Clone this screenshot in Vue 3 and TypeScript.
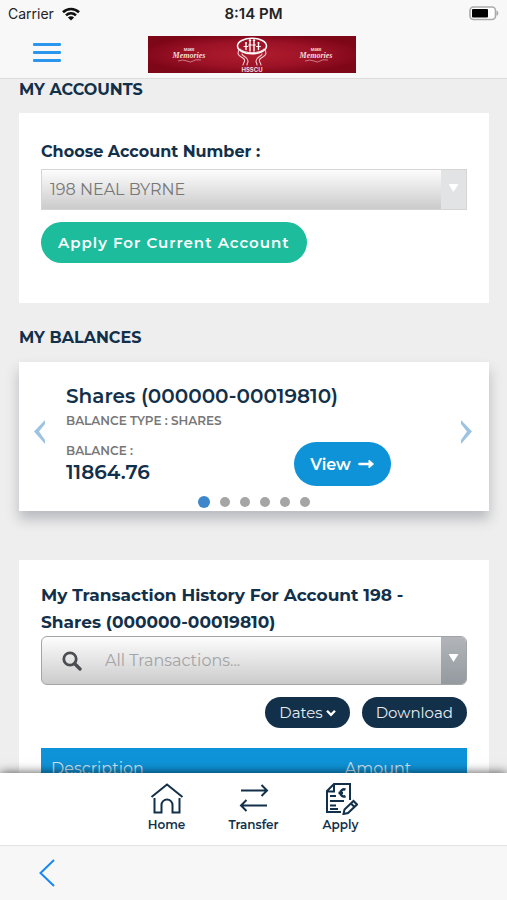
<script setup lang="ts">
import { ref } from 'vue'

interface Balance {
  name: string
  type: string
  amount: string
}

const account = ref('198 NEAL BYRNE')
const accounts: string[] = ['198 NEAL BYRNE']
const transactionFilter = ref('All Transactions...')
const balance: Balance = {
  name: 'Shares (000000-00019810)',
  type: 'SHARES',
  amount: '11864.76',
}
const slides = 6
const activeSlide = ref(0)

function step(by: number): void {
  activeSlide.value = (activeSlide.value + by + slides) % slides
}
</script>

<template>
  <div class="screen">
    <header class="top">
      <div class="status">
        <div class="carrier">
          <span>Carrier</span>
          <svg width="18" height="14" viewBox="0 0 18 14" aria-hidden="true">
            <g fill="none" stroke="#111" stroke-width="2.6">
              <path d="M1 5.2C5.5 0.9 12.5 0.9 17 5.2" />
              <path d="M4 8.4C6.9 5.7 11.1 5.7 14 8.4" />
            </g>
            <path d="M9 13.5L5.9 10.4C7.7 8.9 10.3 8.9 12.1 10.4Z" fill="#111" />
          </svg>
        </div>
        <strong class="clock">8:14 PM</strong>
        <svg class="battery" width="30" height="15" viewBox="0 0 30 15" aria-hidden="true">
          <rect x="1" y="1" width="25.5" height="12.5" rx="3.5" fill="#fff" stroke="#aaa" stroke-width="1.6" />
          <rect x="3" y="3" width="16" height="8.5" rx="1" fill="#000" />
          <path d="M28 5.2Q30 7.3 28 9.3Z" fill="#aaa" stroke="#aaa" />
        </svg>
      </div>
      <div class="brand-row">
        <button class="menu" type="button" aria-label="Menu"><i></i><i></i><i></i></button>
        <svg class="banner" width="208" height="37" viewBox="0 0 208 37" role="img" aria-label="HSSCU">
          <defs>
            <radialGradient id="red" cx="50%" cy="50%" r="55%">
              <stop offset="0" stop-color="#b01c2e" />
              <stop offset="0.6" stop-color="#9c1226" />
              <stop offset="1" stop-color="#7d0617" />
            </radialGradient>
          </defs>
          <rect width="208" height="37" fill="url(#red)" />
          <g v-for="x in [41, 168]" :key="x" fill="#f6dcdc" text-anchor="middle">
            <text :x="x" y="15" class="tiny">Make</text>
            <text :x="x" y="22" class="script">Memories</text>
            <path :d="`M${x - 11} 25q5 -2 9 0t6 0t8 -1`" fill="none" stroke="#e2a8ae" stroke-width="0.7" />
          </g>
          <g fill="none" stroke="#fff" stroke-linecap="round">
            <ellipse cx="104" cy="10" rx="14.5" ry="7.8" stroke-width="1.5" />
            <path d="M92 13c4 5 20 5 24 0" stroke-width="0.9" />
            <path d="M98 8.5v5M102 6v9M106 6v9M110.5 8.5v5" stroke-width="1.4" />
            <path d="M96 10.5h4M100.5 9h7M108.5 10.5h4" stroke-width="0.9" />
            <path d="M91 14c-3 6 2 6 5 9c2 2 -1 4 -1 6M94 18c1 3 6 3 6 7c0 2 -1 2 -1 4M117 14c3 6 -2 6 -5 9c-2 2 1 4 1 6M114 18c-1 3 -6 3 -6 7c0 2 1 2 1 4" stroke-width="1.1" stroke="#f3cfd2" />
          </g>
          <g fill="#fff">
            <circle cx="98" cy="7" r="1.1" /><circle cx="102" cy="4.5" r="1.2" />
            <circle cx="106" cy="4.5" r="1.2" /><circle cx="110.5" cy="7" r="1.1" />
          </g>
          <text x="104" y="35.5" class="logo-name" fill="#f6dcdc" text-anchor="middle">HSSCU</text>
        </svg>
      </div>
    </header>

    <main class="content">
      <h2>MY ACCOUNTS</h2>
      <section class="card accounts">
        <label for="account">Choose Account Number :</label>
        <div class="field">
          <select id="account" v-model="account">
            <option v-for="a in accounts" :key="a">{{ a }}</option>
          </select>
          <span class="caret"></span>
        </div>
        <button class="apply" type="button">Apply For Current Account</button>
      </section>

      <h2 class="second">MY BALANCES</h2>
      <section class="card balances">
        <button class="arrow" type="button" aria-label="Previous balance" @click="step(-1)">
          <svg width="14" height="26" viewBox="0 0 14 26"><path d="M12 1L1 12.5L12 25V21L6 12.5L12 5Z" fill="#9dc3e2" /></svg>
        </button>
        <div class="slide">
          <h3>{{ balance.name }}</h3>
          <p class="caption">BALANCE TYPE : {{ balance.type }}</p>
          <div class="amount-row">
            <div>
              <p class="caption">BALANCE :</p>
              <p class="amount">{{ balance.amount }}</p>
            </div>
            <button class="view" type="button">
              View
              <svg width="17" height="10" viewBox="0 0 17 10" aria-hidden="true">
                <path d="M1.5 5H12" stroke="#fff" stroke-width="2.6" stroke-linecap="round" />
                <path d="M11 1L15.5 5L11 9Z" fill="#fff" stroke="#fff" stroke-linejoin="round" />
              </svg>
            </button>
          </div>
        </div>
        <button class="arrow" type="button" aria-label="Next balance" @click="step(1)">
          <svg width="14" height="26" viewBox="0 0 14 26"><path d="M2 1L13 12.5L2 25V21L8 12.5L2 5Z" fill="#9dc3e2" /></svg>
        </button>
        <div class="dots">
          <button
            v-for="n in slides"
            :key="n"
            type="button"
            :class="{ active: n - 1 === activeSlide }"
            :aria-label="`Balance ${n}`"
            @click="activeSlide = n - 1"
          ></button>
        </div>
      </section>

      <section class="card history">
        <label for="filter">My Transaction History For Account 198 - Shares (000000-00019810)</label>
        <div class="field search">
          <svg class="glass" width="20" height="20" viewBox="0 0 20 20" aria-hidden="true">
            <circle cx="8" cy="8" r="6.2" fill="none" stroke="#4a4e52" stroke-width="2.8" />
            <path d="M12.5 12.5L18 18" stroke="#4a4e52" stroke-width="3.3" stroke-linecap="round" />
          </svg>
          <select id="filter" v-model="transactionFilter">
            <option>All Transactions...</option>
          </select>
          <span class="caret"></span>
        </div>
        <div class="actions">
          <button type="button">
            Dates
            <svg width="10" height="8" viewBox="0 0 10 8" aria-hidden="true">
              <path d="M1 1.8L5 5.8L9 1.8" fill="none" stroke="#fff" stroke-width="2.3" />
            </svg>
          </button>
          <button type="button">Download</button>
        </div>
        <table>
          <thead>
            <tr><th scope="col">Description</th><th scope="col" class="sum">Amount</th></tr>
          </thead>
        </table>
      </section>
    </main>

    <nav class="tabs" aria-label="Main">
      <a href="#home">
        <svg width="34" height="32" viewBox="0 0 34 32" aria-hidden="true">
          <path d="M1.5 14L17 1.5L32.5 14M4.5 15V29.5H11.5V22a5.5 5.5 0 0 1 11 0v7.5H29.5V15" />
        </svg>
        Home
      </a>
      <a href="#transfer">
        <svg width="34" height="32" viewBox="0 0 34 32" aria-hidden="true">
          <path d="M4 7.5H30M24.5 2L30 7.5L24.5 13M30 22.5H4M9.5 17L4 22.5L9.5 28" />
        </svg>
        Transfer
      </a>
      <a href="#apply">
        <svg width="34" height="32" viewBox="0 0 34 32" aria-hidden="true">
          <path d="M26 17V1H10L3 8V29H17M10 1V8.5H3M6 13H12M6 18H20M6 22.5H12M6 26H14" />
          <path d="M21.5 6.7a3.6 3.6 0 1 0 0 6.5M14.5 10H19" stroke-width="2.4" />
          <path d="M19.5 31L20.5 26.5L29.5 18L33 21.5L24 30ZM27 20.5L30.5 24" />
        </svg>
        Apply
      </a>
    </nav>
    <footer class="toolbar">
      <button type="button" aria-label="Back">
        <svg width="16" height="28" viewBox="0 0 16 28"><path d="M15 1L1.5 14L15 27" fill="none" stroke="#1787f2" stroke-width="2" /></svg>
      </button>
    </footer>
  </div>
</template>

<style>
body {
  margin: 0;
}
</style>

<style scoped>
* {
  box-sizing: border-box;
}
.screen {
  display: flex;
  flex-direction: column;
  height: 100vh;
  background: #eee;
  color: #12304a;
  font-family: Montserrat, Inter, sans-serif;
}
button {
  padding: 0;
  border: 0;
  background: none;
  font-family: inherit;
  cursor: pointer;
}
h2, h3, p {
  margin: 0;
}
.top {
  flex: none;
  background: #f9f8f9;
  border-bottom: 1px solid #dcdcdc;
}
.status {
  display: grid;
  grid-template-columns: 1fr auto 1fr;
  align-items: center;
  height: 27px;
  padding: 0 8px;
  color: #222;
  font-family: Inter, sans-serif;
  font-size: 14px;
}
.clock {
  font-size: 15px;
  font-weight: 600;
}
.carrier {
  display: flex;
  align-items: center;
  gap: 8px;
}
.battery {
  justify-self: end;
}
.brand-row {
  display: grid;
  grid-template-columns: 1fr auto 1fr;
  align-items: center;
  height: 51px;
  padding: 0 33px;
}
.banner {
  margin: 3px 4px 0 0;
}
.tiny {
  font: bold 4px Inter, sans-serif;
}
.script {
  font: italic bold 8px "Liberation Serif", serif;
}
.logo-name {
  font: bold 6px Inter, sans-serif;
}
.menu {
  display: flex;
  flex-direction: column;
  gap: 5px;
  width: 28px;
}
.menu i {
  height: 3px;
  border-radius: 1px;
  background: #2b96ee;
}
.content {
  flex: 1;
  min-height: 0;
  overflow: hidden;
  padding: 0 18px 0 19px;
}
h2 {
  padding: 1px 0 13px;
  font-size: 16px;
  font-weight: 700;
  line-height: 20px;
}
.second {
  padding: 25px 0 14px;
}
.card {
  background: #fff;
}
label {
  display: block;
  font-size: 16px;
  font-weight: 700;
  line-height: 27px;
}
.accounts {
  height: 190px;
  padding: 25px 22px;
}
.field {
  position: relative;
  display: flex;
  margin-top: 4px;
  height: 41px;
  border: 1px solid #d5d5d5;
  background: linear-gradient(#fdfdfd, #cbcbcb);
}
select {
  flex: 1;
  min-width: 0;
  padding: 0 34px 0 8px;
  border: 0;
  background: none;
  color: #777;
  font-family: inherit;
  font-size: 16px;
  appearance: none;
}
.caret {
  position: absolute;
  top: 0;
  right: 0;
  bottom: 0;
  display: flex;
  justify-content: center;
  width: 25px;
  padding-top: 14px;
  background: #e2e3e5;
  pointer-events: none;
}
.caret::after {
  content: "";
  width: 10px;
  height: 8px;
  background: #fff;
  clip-path: polygon(0 0, 100% 0, 50% 100%);
}
.apply {
  height: 41px;
  margin-top: 12px;
  padding: 0 17px;
  border-radius: 21px;
  background: #1dbc9c;
  color: #fff;
  font-size: 15px;
  font-weight: 600;
  letter-spacing: 1px;
}
.balances {
  display: grid;
  grid-template-columns: 46px 1fr 46px;
  height: 149px;
  box-shadow: 0 8px 12px rgba(70, 75, 90, 0.32);
}
.arrow {
  height: 142px;
}
.arrow:first-child {
  padding-left: 14px;
  text-align: left;
}
.slide {
  padding: 22px 0 0 1px;
}
h3 {
  font-size: 20px;
  font-weight: 600;
  line-height: 24px;
}
.caption {
  color: #777;
  font-size: 12px;
  font-weight: 600;
  line-height: 14px;
}
h3 + .caption {
  margin-top: 6px;
}
.amount-row {
  display: flex;
  justify-content: space-between;
  align-items: center;
  margin-top: 14px;
  padding-right: 52px;
}
.amount {
  margin-top: 2px;
  font-size: 20px;
  font-weight: 600;
  line-height: 24px;
}
.view {
  display: flex;
  align-items: center;
  justify-content: center;
  gap: 7px;
  width: 97px;
  height: 44px;
  border-radius: 22px;
  background: #0f93d8;
  color: #fff;
  font-size: 16px;
  font-weight: 600;
}
.dots {
  grid-column: 1 / -1;
  display: flex;
  justify-content: center;
  align-items: center;
  gap: 10px;
  margin-top: -11px;
  height: 14px;
}
.dots button {
  width: 10px;
  height: 10px;
  border-radius: 50%;
  background: #a5a5a5;
}
.dots .active {
  width: 12px;
  height: 12px;
  background: #3e86cc;
}
.history {
  min-height: 100%;
  margin-top: 49px;
  padding: 22px;
}
.history label {
  font-size: 17px;
}
.search {
  margin-top: 0;
  height: 49px;
  align-items: center;
  padding-left: 20px;
  border-color: #a2a4a6;
  border-radius: 6px;
  overflow: hidden;
}
.search select {
  height: 100%;
  padding-left: 23px;
  color: #a2a4a6;
}
.search .caret {
  padding-top: 17px;
  background: linear-gradient(#b1b5ba, #949a9f);
}
.actions {
  display: flex;
  justify-content: flex-end;
  gap: 12px;
  margin: 12px 0 20px;
}
.actions button {
  display: flex;
  align-items: center;
  gap: 3px;
  height: 31px;
  padding: 0 14px;
  border-radius: 16px;
  background: #12304a;
  color: #e8edf2;
  font-size: 15px;
}
table {
  width: 100%;
  border-collapse: collapse;
  background: #0f93d8;
}
th {
  height: 41px;
  padding: 0 10px;
  color: #cfe4f2;
  font-size: 16px;
  font-weight: 400;
  text-align: left;
}
th.sum {
  width: 178px;
  text-align: center;
}
.tabs {
  position: relative;
  flex: none;
  display: flex;
  justify-content: center;
  height: 73px;
  padding-top: 10px;
  background: #fff;
  border-bottom: 1px solid #e2e2e2;
  box-shadow: 0 0 10px rgba(0, 0, 0, 0.7);
}
.tabs a {
  display: flex;
  flex-direction: column;
  align-items: center;
  gap: 2px;
  width: 87px;
  color: #12304a;
  font-size: 12px;
  font-weight: 600;
  line-height: 16px;
  text-decoration: none;
}
.tabs svg {
  fill: none;
  stroke: #12304a;
  stroke-width: 2;
}
.toolbar {
  position: relative;
  flex: none;
  display: flex;
  align-items: center;
  height: 54px;
  padding-left: 39px;
  background: #f7f7f7;
}
.toolbar button {
  height: 28px;
}
</style>
